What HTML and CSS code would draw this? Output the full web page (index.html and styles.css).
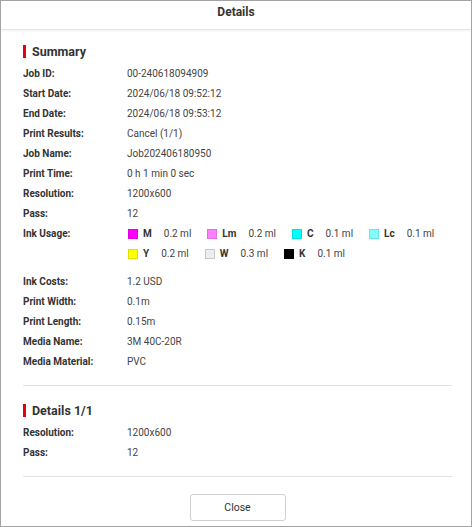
FILE: index.html
```html
<!DOCTYPE html>
<html>
<head>
<meta charset="utf-8">
<link rel="stylesheet" href="styles.css">
</head>
<body>
<div class="dialog">
  <div class="header">Details</div>
  <div class="content">
    <div class="section-title">Summary</div>
    <div class="row"><div class="label">Job ID:</div><div class="value">00-240618094909</div></div>
    <div class="row"><div class="label">Start Date:</div><div class="value">2024/06/18 09:52:12</div></div>
    <div class="row"><div class="label">End Date:</div><div class="value">2024/06/18 09:53:12</div></div>
    <div class="row"><div class="label">Print Results:</div><div class="value">Cancel (1/1)</div></div>
    <div class="row"><div class="label">Job Name:</div><div class="value">Job202406180950</div></div>
    <div class="row"><div class="label">Print Time:</div><div class="value">0 h 1 min 0 sec</div></div>
    <div class="row"><div class="label">Resolution:</div><div class="value">1200x600</div></div>
    <div class="row"><div class="label">Pass:</div><div class="value">12</div></div>
    <div class="row ink-row"><div class="label">Ink Usage:</div>
      <div class="inks">
        <div class="ink"><span class="sw sw-m"></span><span class="ink-name">M</span><span class="ink-val">0.2 ml</span></div>
        <div class="ink"><span class="sw sw-lm"></span><span class="ink-name">Lm</span><span class="ink-val">0.2 ml</span></div>
        <div class="ink"><span class="sw sw-c"></span><span class="ink-name">C</span><span class="ink-val">0.1 ml</span></div>
        <div class="ink"><span class="sw sw-lc"></span><span class="ink-name">Lc</span><span class="ink-val">0.1 ml</span></div>
        <div class="ink"><span class="sw sw-y"></span><span class="ink-name">Y</span><span class="ink-val">0.2 ml</span></div>
        <div class="ink"><span class="sw sw-w"></span><span class="ink-name">W</span><span class="ink-val">0.3 ml</span></div>
        <div class="ink"><span class="sw sw-k"></span><span class="ink-name">K</span><span class="ink-val">0.1 ml</span></div>
      </div>
    </div>
    <div class="row"><div class="label">Ink Costs:</div><div class="value">1.2 USD</div></div>
    <div class="row"><div class="label">Print Width:</div><div class="value">0.1m</div></div>
    <div class="row"><div class="label">Print Length:</div><div class="value">0.15m</div></div>
    <div class="row"><div class="label">Media Name:</div><div class="value">3M 40C-20R</div></div>
    <div class="row"><div class="label">Media Material:</div><div class="value">PVC</div></div>
    <div class="divider"></div>
    <div class="section-title">Details 1/1</div>
    <div class="row"><div class="label">Resolution:</div><div class="value">1200x600</div></div>
    <div class="row"><div class="label">Pass:</div><div class="value">12</div></div>
    <div class="divider"></div>
    <div class="footer"><button class="btn">Close</button></div>
  </div>
</div>
</body>
</html>
```
FILE: styles.css
```css
html, body {
  margin: 0;
  padding: 0;
  background: #fff;
}
body {
  font-family: Roboto, "Liberation Sans", sans-serif;
  font-size: 10px;
  color: #333;
}
.dialog {
  width: 472px;
  height: 527px;
  box-sizing: border-box;
  border: 1px solid #a3a3a3;
  display: flex;
  flex-direction: column;
  overflow: hidden;
}
.header {
  height: 28px;
  line-height: 22px;
  text-align: center;
  font-weight: 700;
  font-size: 12px;
  color: #333;
  border-bottom: 1px solid #e6e6e6;
  box-shadow: 0 1px 2px rgba(0,0,0,0.06);
  flex: none;
}
.content {
  padding: 12px 19px 0 22px;
}
.section-title {
  height: 20px;
  line-height: 20px;
  font-size: 12.5px;
  font-weight: 700;
  color: #333;
  padding-left: 9px;
  position: relative;
  margin-bottom: 2px;
}
.section-title::before {
  content: "";
  position: absolute;
  left: 0;
  top: 3px;
  width: 3px;
  height: 13px;
  background: #e60012;
}
.row {
  display: flex;
  line-height: 20px;
  height: 20px;
}
.label {
  width: 104px;
  flex: none;
  font-weight: 700;
  color: #333;
}
.value {
  color: #444;
}
.ink-row {
  height: 40px;
  margin-bottom: 8px;
}
.inks {
  display: flex;
  flex-wrap: wrap;
  width: 325px;
  column-gap: 16px;
  padding-left: 1px;
}
.ink {
  display: flex;
  align-items: center;
  height: 20px;
}
.sw {
  width: 10px;
  height: 10px;
  box-sizing: border-box;
  border: 1px solid rgba(0,0,0,0.12);
  margin-right: 5px;
}
.ink-name {
  font-weight: 700;
  margin-right: 12px;
  color: #333;
}
.ink-val {
  color: #444;
}
.sw-m { background: #ff00ff; }
.sw-lm { background: #ff80ff; }
.sw-c { background: #00ffff; }
.sw-lc { background: #80ffff; }
.sw-y { background: #ffff00; }
.sw-w { background: #eeeeee; border-color: #c8c8c8; }
.sw-k { background: #000000; }
.divider {
  height: 1px;
  background: #e3e3e3;
  margin: 13px 0 15px;
}
.footer {
  display: flex;
  justify-content: center;
  padding-top: 2px;
}
.btn {
  width: 96px;
  height: 27px;
  background: #fff;
  border: 1px solid #cfcfcf;
  border-radius: 3px;
  font-family: inherit;
  font-size: 10.5px;
  color: #333;
}
```
